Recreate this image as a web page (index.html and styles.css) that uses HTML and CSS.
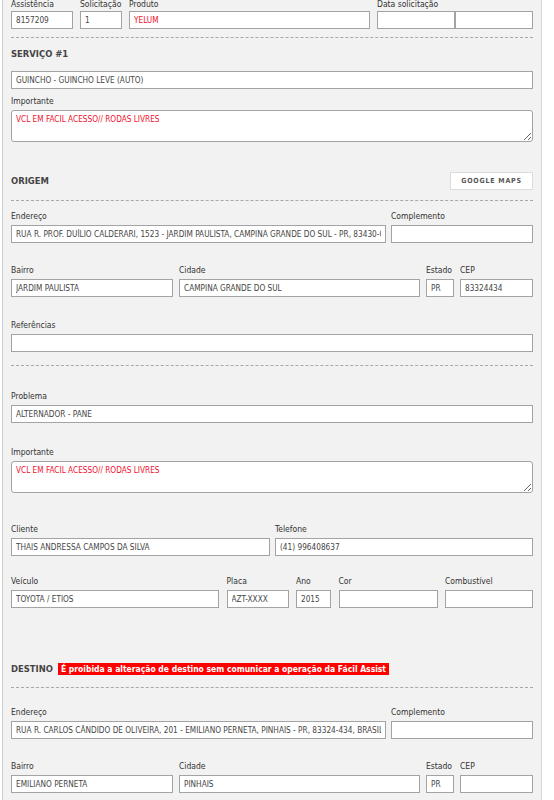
FILE: index.html
```html
<!DOCTYPE html>
<html lang="pt-BR">
<head>
<meta charset="utf-8">
<title>Atendimento</title>
<link rel="stylesheet" href="styles.css">
</head>
<body>
<div class="panel">
  <div class="row row-first">
    <div class="field w62"><label>Assistência</label><input type="text" value="8157209"></div>
    <div class="field w42"><label>Solicitação</label><input type="text" value="1"></div>
    <div class="field w241"><label>Produto</label><input type="text" class="red" value="YELUM"></div>
    <div class="field w156"><label>Data solicitação</label><div class="pair"><input type="text"><input type="text"></div></div>
  </div>
  <div class="sep mt8"></div>

  <h3 class="title mt9">SERVIÇO #1</h3>
  <input type="text" class="full mt10" value="GUINCHO - GUINCHO LEVE (AUTO)">
  <div class="field mt5"><label>Importante</label><textarea class="red">VCL EM FACIL ACESSO// RODAS LIVRES</textarea></div>

  <div class="section-head mt30"><h3 class="title">ORIGEM</h3><button type="button" class="maps">GOOGLE MAPS</button></div>
  <div class="sep mt10"></div>
  <div class="row mt8">
    <div class="field w375"><label>Endereço</label><input type="text" value="RUA R. PROF. DUÍLIO CALDERARI, 1523 - JARDIM PAULISTA, CAMPINA GRANDE DO SUL - PR, 83430-000, BRASIL"></div>
    <div class="field w142"><label>Complemento</label><input type="text"></div>
  </div>
  <div class="row mt20">
    <div class="field w162"><label>Bairro</label><input type="text" value="JARDIM PAULISTA"></div>
    <div class="field w241"><label>Cidade</label><input type="text" value="CAMPINA GRANDE DO SUL"></div>
    <div class="field w28"><label>Estado</label><input type="text" value="PR"></div>
    <div class="field w73"><label>CEP</label><input type="text" value="83324434"></div>
  </div>
  <div class="field mt21"><label>Referências</label><input type="text"></div>
  <div class="sep mt13"></div>

  <div class="field mt23"><label>Problema</label><input type="text" value="ALTERNADOR - PANE"></div>
  <div class="field mt22"><label>Importante</label><textarea class="red">VCL EM FACIL ACESSO// RODAS LIVRES</textarea></div>
  <div class="row mt29">
    <div class="field w259"><label>Cliente</label><input type="text" value="THAIS ANDRESSA CAMPOS DA SILVA"></div>
    <div class="field w258"><label>Telefone</label><input type="text" value="(41) 996408637"></div>
  </div>
  <div class="row mt18">
    <div class="field w208"><label>Veículo</label><input type="text" value="TOYOTA / ETIOS"></div>
    <div class="field w62"><label>Placa</label><input type="text" value="AZT-XXXX"></div>
    <div class="field w35"><label>Ano</label><input type="text" value="2015"></div>
    <div class="field w99"><label>Cor</label><input type="text"></div>
    <div class="field w88"><label>Combustível</label><input type="text"></div>
  </div>

  <div class="section-head dest mt54"><h3 class="title">DESTINO</h3><span class="alert">É proibida a alteração de destino sem comunicar a operação da Fácil Assist</span></div>
  <div class="sep mt11"></div>
  <div class="row mt17">
    <div class="field w375"><label>Endereço</label><input type="text" value="RUA R. CARLOS CÂNDIDO DE OLIVEIRA, 201 - EMILIANO PERNETA, PINHAIS - PR, 83324-434, BRASIL"></div>
    <div class="field w142"><label>Complemento</label><input type="text"></div>
  </div>
  <div class="row mt20">
    <div class="field w162"><label>Bairro</label><input type="text" value="EMILIANO PERNETA"></div>
    <div class="field w241"><label>Cidade</label><input type="text" value="PINHAIS"></div>
    <div class="field w28"><label>Estado</label><input type="text" value="PR"></div>
    <div class="field w73"><label>CEP</label><input type="text"></div>
  </div>
  <div class="field mt21"><label>Referências</label><input type="text"></div>
</div>
</body>
</html>
```

FILE: styles.css
```css
html, body {
  margin: 0;
  padding: 0;
  background: #ffffff;
}
body {
  font-family: "DejaVu Sans Condensed", "Liberation Sans", sans-serif;
  color: #333333;
}
.panel {
  box-sizing: border-box;
  width: 540px;
  margin: -5px 0 0 2px;
  padding: 0 8px 40px 8px;
  background: #f2f2f2;
  border-left: 1px solid #cfcfcf;
  border-right: 1px solid #d6d6d6;
}
.row {
  display: flex;
  justify-content: space-between;
  align-items: flex-end;
}
.field {
  display: flex;
  flex-direction: column;
}
label {
  display: block;
  font-size: 8.5px;
  line-height: 14px;
  height: 14px;
  margin-bottom: 2px;
  color: #333333;
  white-space: nowrap;
}
.row-first label {
  margin-top: 2px;
  margin-bottom: 0;
}
input, textarea {
  box-sizing: border-box;
  margin: 0;
  width: 100%;
  background: #ffffff;
  border: 1px solid #a3a3a3;
  font-family: "DejaVu Sans Condensed", "Liberation Sans", sans-serif;
  font-size: 8.2px;
  color: #464646;
  outline: none;
}
input {
  display: block;
  height: 18px;
  padding: 0 4px;
  border-radius: 0;
}
textarea {
  display: block;
  height: 32px;
  padding: 3px 4px;
  border-radius: 3px;
  line-height: 10px;
}
.red {
  color: #f0102e;
}
.full {
  width: 100%;
}
.pair {
  display: flex;
}
.pair input {
  width: 78px;
}
.w28 { width: 28px; }
.w35 { width: 35px; }
.w42 { width: 42px; }
.w62 { width: 62px; }
.w73 { width: 73px; }
.w88 { width: 88px; }
.w99 { width: 99px; }
.w142 { width: 142px; }
.w156 { width: 156px; }
.w162 { width: 162px; }
.w208 { width: 208px; }
.w241 { width: 241px; }
.w258 { width: 258px; }
.w259 { width: 259px; }
.w375 { width: 375px; }

.sep {
  height: 0;
  border-top: 1px dashed #a8a8a8;
}
.title {
  margin: 0;
  font-size: 9.4px;
  line-height: 14px;
  font-weight: bold;
  color: #444444;
}
.section-head {
  display: flex;
  justify-content: space-between;
  align-items: center;
  height: 18px;
}
.section-head.dest {
  justify-content: flex-start;
  height: 14px;
  gap: 5px;
}
.maps {
  box-sizing: border-box;
  width: 83px;
  height: 18px;
  margin: 0;
  padding: 0;
  background: #ffffff;
  border: 1px solid #dcdcdc;
  font-family: "DejaVu Sans Condensed", "Liberation Sans", sans-serif;
  font-size: 7px;
  font-weight: bold;
  letter-spacing: 0.8px;
  color: #555555;
}
.alert {
  display: inline-block;
  height: 12px;
  line-height: 12px;
  padding: 0 3px;
  background: #ff0000;
  color: #ffffff;
  font-size: 8.5px;
  font-weight: bold;
  white-space: nowrap;
}

.mt5 { margin-top: 5px; }
.mt8 { margin-top: 8px; }
.mt9 { margin-top: 9px; }
.mt10 { margin-top: 10px; }
.mt11 { margin-top: 11px; }
.mt13 { margin-top: 13px; }
.mt17 { margin-top: 17px; }
.mt18 { margin-top: 18px; }
.mt20 { margin-top: 20px; }
.mt21 { margin-top: 21px; }
.mt22 { margin-top: 22px; }
.mt23 { margin-top: 23px; }
.mt29 { margin-top: 29px; }
.mt30 { margin-top: 30px; }
.mt54 { margin-top: 54px; }
```
